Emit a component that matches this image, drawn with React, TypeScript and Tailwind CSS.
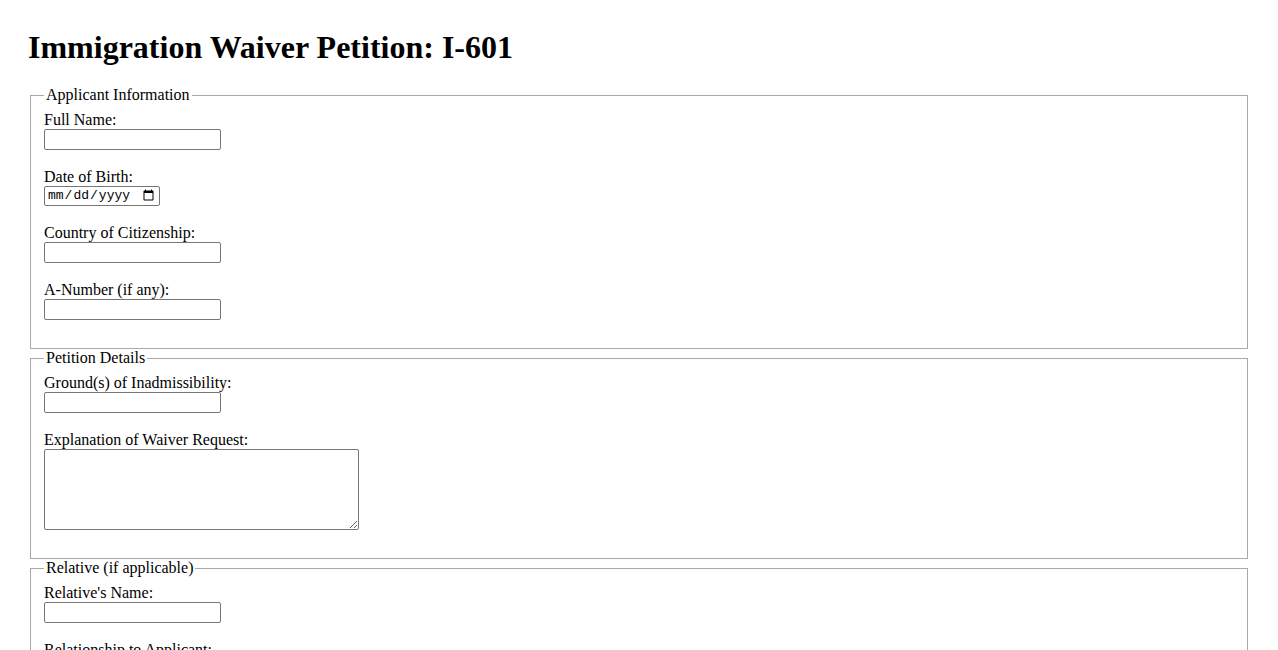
import type { ReactNode } from 'react'

type FieldProps = {
  id: string
  label: string
  type?: 'text' | 'date' | 'textarea'
}

const inputBase =
  "block rounded-[2px] border border-[#767676] bg-white px-[2px] font-['Liberation_Sans',Arial,sans-serif] text-[13.33px] text-black outline-none"

function Field({ id, label, type = 'text' }: FieldProps) {
  return (
    <div className="mb-[17px]">
      <label htmlFor={id} className="block leading-[19px]">
        {label}
      </label>
      {type === 'textarea' ? (
        <textarea id={id} className={`${inputBase} h-[81px] w-[315px]`} />
      ) : type === 'date' ? (
        <input
          id={id}
          type="date"
          className="block h-[20px] w-[116px] rounded-[2px] border border-[#767676] bg-white px-[2px] font-['Liberation_Mono',monospace] text-[13px] text-black outline-none"
        />
      ) : (
        <input id={id} type="text" className={`${inputBase} h-[21px] w-[177px]`} />
      )}
    </div>
  )
}

function Section({ legend, children }: { legend: string; children: ReactNode }) {
  return (
    <fieldset className="mx-[2px] border border-[#a9a9a9] px-[13px] pt-[5.6px] pb-[11.5px]">
      <legend className="px-[2px] leading-[18px]">{legend}</legend>
      {children}
    </fieldset>
  )
}

export default function App() {
  return (
    <div className="min-h-screen bg-white px-[28px] pt-[8px] font-['Liberation_Serif','Times_New_Roman',serif] text-[16px] text-black">
      <h1 className="mt-[21px] mb-[20px] text-[32px] leading-[37px] font-bold">
        Immigration Waiver Petition: I-601
      </h1>
      <form>
        <Section legend="Applicant Information">
          <Field id="fullName" label="Full Name:" />
          <Field id="dob" label="Date of Birth:" type="date" />
          <Field id="country" label="Country of Citizenship:" />
          <Field id="aNumber" label="A-Number (if any):" />
        </Section>
        <Section legend="Petition Details">
          <Field id="grounds" label="Ground(s) of Inadmissibility:" />
          <Field id="explanation" label="Explanation of Waiver Request:" type="textarea" />
        </Section>
        <Section legend="Relative (if applicable)">
          <Field id="relName" label="Relative's Name:" />
          <Field id="relationship" label="Relationship to Applicant:" />
          <Field id="relStatus" label="Relative's Immigration Status:" />
        </Section>
      </form>
    </div>
  )
}
